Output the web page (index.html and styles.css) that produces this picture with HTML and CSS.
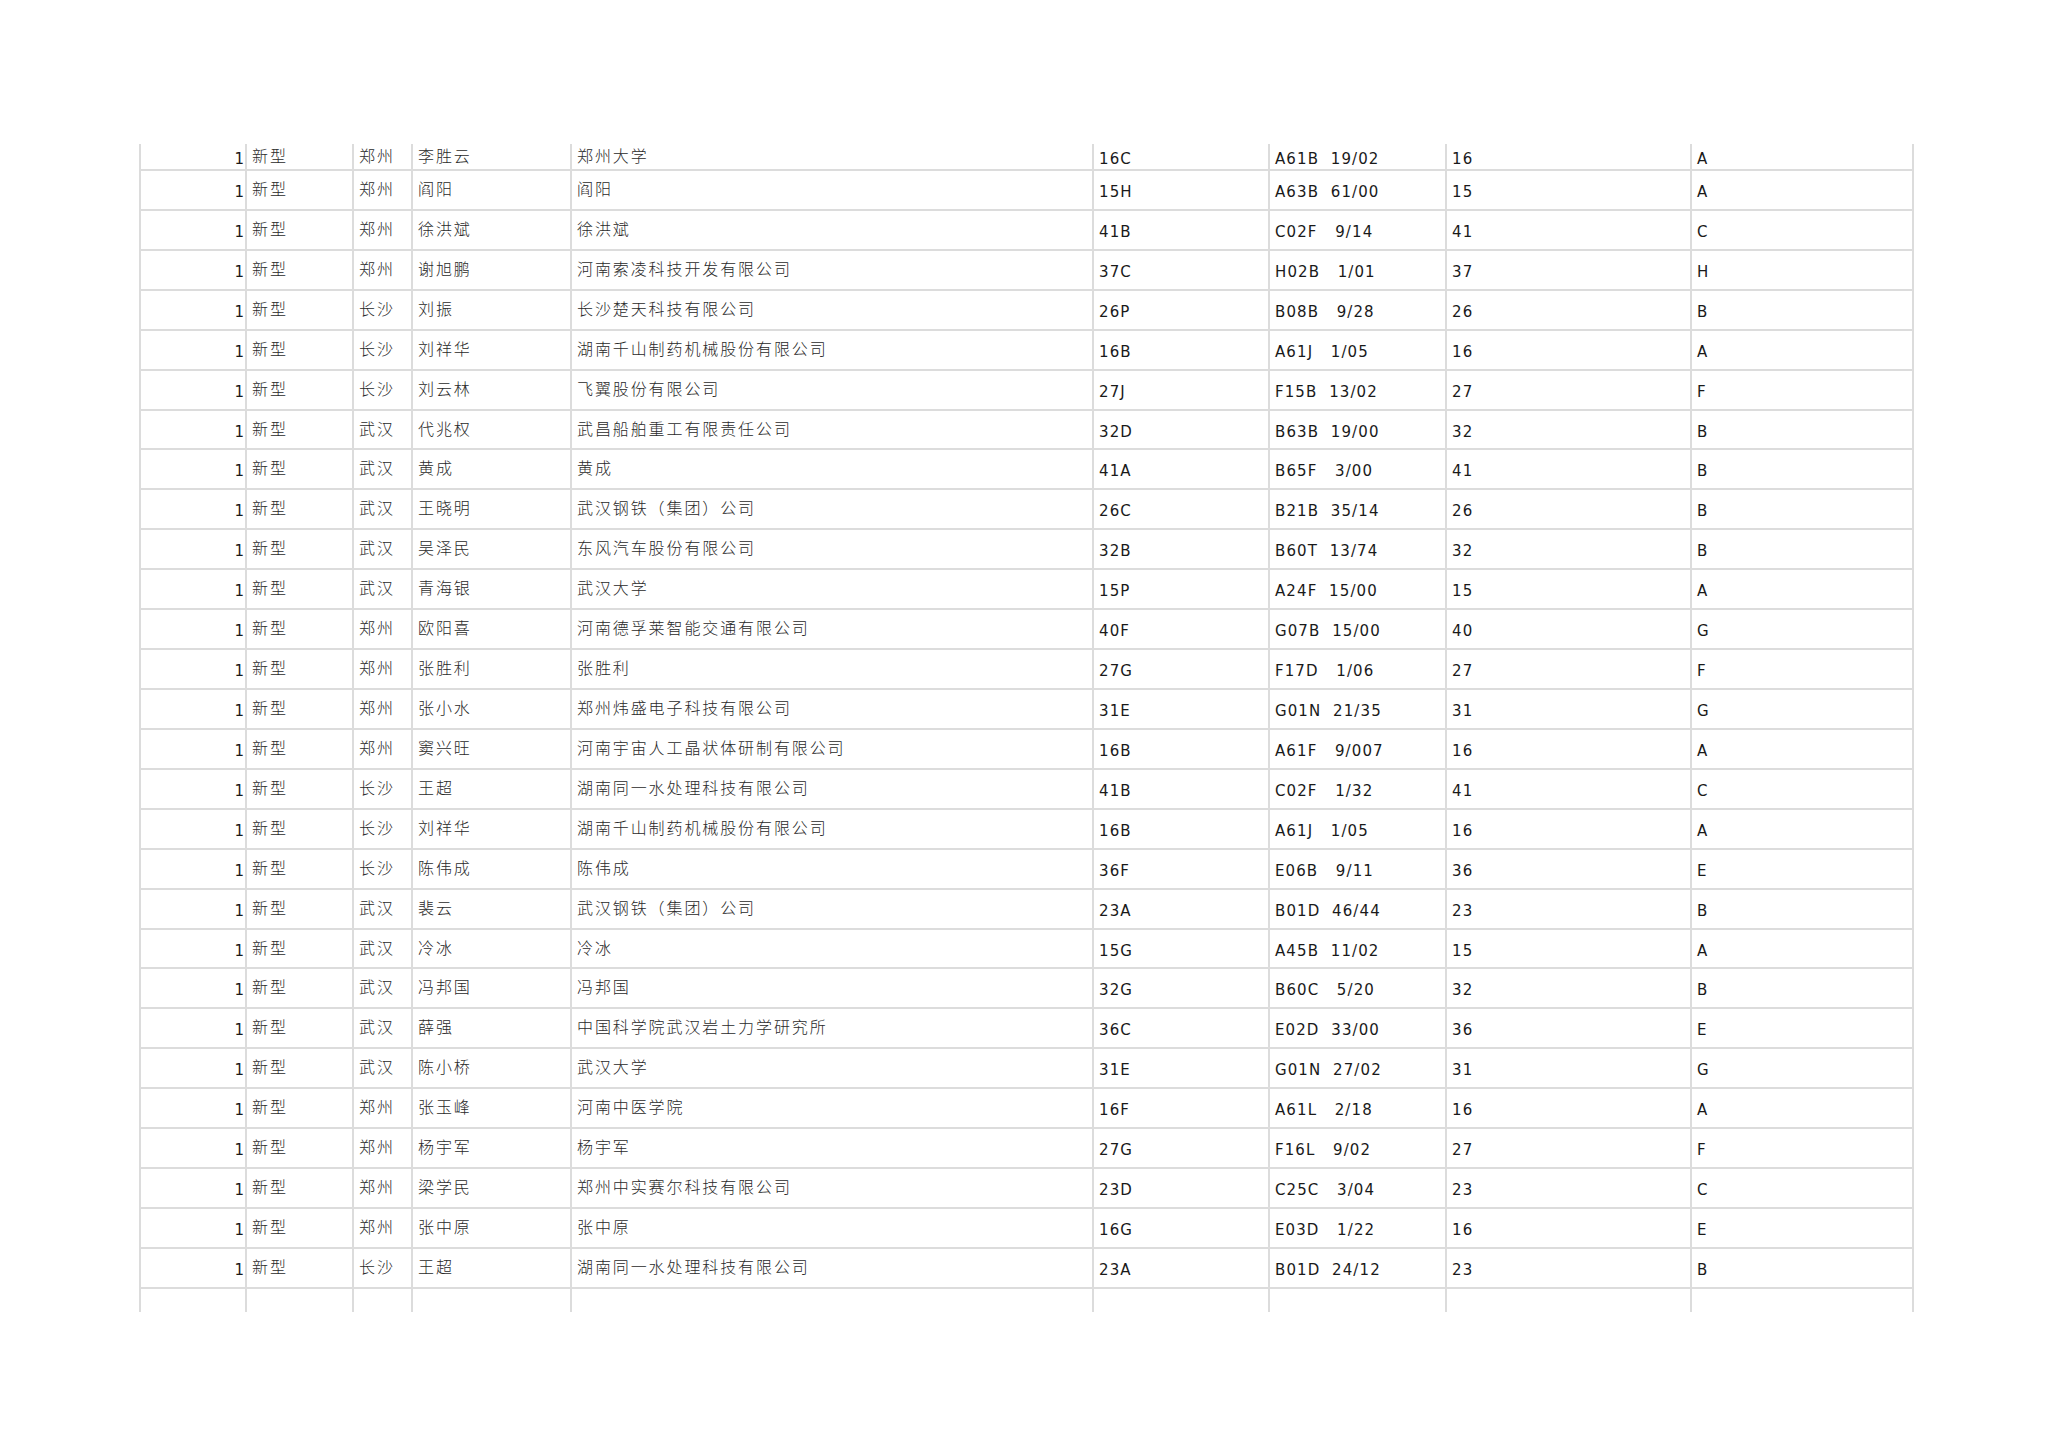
FILE: index.html
```html
<!DOCTYPE html>
<html lang="zh-CN">
<head>
<meta charset="utf-8">
<title>新型</title>
<link rel="stylesheet" href="styles.css">
</head>
<body>
<div class="sheet">
  <div class="row first"><div class="cell num">1</div><div class="cell zh">新型</div><div class="cell zh">郑州</div><div class="cell zh">李胜云</div><div class="cell zh">郑州大学</div><div class="cell">16C</div><div class="cell">A61B  19/02</div><div class="cell">16</div><div class="cell">A</div></div>
  <div class="row"><div class="cell num">1</div><div class="cell zh">新型</div><div class="cell zh">郑州</div><div class="cell zh">阎阳</div><div class="cell zh">阎阳</div><div class="cell">15H</div><div class="cell">A63B  61/00</div><div class="cell">15</div><div class="cell">A</div></div>
  <div class="row"><div class="cell num">1</div><div class="cell zh">新型</div><div class="cell zh">郑州</div><div class="cell zh">徐洪斌</div><div class="cell zh">徐洪斌</div><div class="cell">41B</div><div class="cell">C02F   9/14</div><div class="cell">41</div><div class="cell">C</div></div>
  <div class="row"><div class="cell num">1</div><div class="cell zh">新型</div><div class="cell zh">郑州</div><div class="cell zh">谢旭鹏</div><div class="cell zh">河南索凌科技开发有限公司</div><div class="cell">37C</div><div class="cell">H02B   1/01</div><div class="cell">37</div><div class="cell">H</div></div>
  <div class="row"><div class="cell num">1</div><div class="cell zh">新型</div><div class="cell zh">长沙</div><div class="cell zh">刘振</div><div class="cell zh">长沙楚天科技有限公司</div><div class="cell">26P</div><div class="cell">B08B   9/28</div><div class="cell">26</div><div class="cell">B</div></div>
  <div class="row"><div class="cell num">1</div><div class="cell zh">新型</div><div class="cell zh">长沙</div><div class="cell zh">刘祥华</div><div class="cell zh">湖南千山制药机械股份有限公司</div><div class="cell">16B</div><div class="cell">A61J   1/05</div><div class="cell">16</div><div class="cell">A</div></div>
  <div class="row"><div class="cell num">1</div><div class="cell zh">新型</div><div class="cell zh">长沙</div><div class="cell zh">刘云林</div><div class="cell zh">飞翼股份有限公司</div><div class="cell">27J</div><div class="cell">F15B  13/02</div><div class="cell">27</div><div class="cell">F</div></div>
  <div class="row"><div class="cell num">1</div><div class="cell zh">新型</div><div class="cell zh">武汉</div><div class="cell zh">代兆权</div><div class="cell zh">武昌船舶重工有限责任公司</div><div class="cell">32D</div><div class="cell">B63B  19/00</div><div class="cell">32</div><div class="cell">B</div></div>
  <div class="row"><div class="cell num">1</div><div class="cell zh">新型</div><div class="cell zh">武汉</div><div class="cell zh">黄成</div><div class="cell zh">黄成</div><div class="cell">41A</div><div class="cell">B65F   3/00</div><div class="cell">41</div><div class="cell">B</div></div>
  <div class="row"><div class="cell num">1</div><div class="cell zh">新型</div><div class="cell zh">武汉</div><div class="cell zh">王晓明</div><div class="cell zh">武汉钢铁（集团）公司</div><div class="cell">26C</div><div class="cell">B21B  35/14</div><div class="cell">26</div><div class="cell">B</div></div>
  <div class="row"><div class="cell num">1</div><div class="cell zh">新型</div><div class="cell zh">武汉</div><div class="cell zh">吴泽民</div><div class="cell zh">东风汽车股份有限公司</div><div class="cell">32B</div><div class="cell">B60T  13/74</div><div class="cell">32</div><div class="cell">B</div></div>
  <div class="row"><div class="cell num">1</div><div class="cell zh">新型</div><div class="cell zh">武汉</div><div class="cell zh">青海银</div><div class="cell zh">武汉大学</div><div class="cell">15P</div><div class="cell">A24F  15/00</div><div class="cell">15</div><div class="cell">A</div></div>
  <div class="row"><div class="cell num">1</div><div class="cell zh">新型</div><div class="cell zh">郑州</div><div class="cell zh">欧阳喜</div><div class="cell zh">河南德孚莱智能交通有限公司</div><div class="cell">40F</div><div class="cell">G07B  15/00</div><div class="cell">40</div><div class="cell">G</div></div>
  <div class="row"><div class="cell num">1</div><div class="cell zh">新型</div><div class="cell zh">郑州</div><div class="cell zh">张胜利</div><div class="cell zh">张胜利</div><div class="cell">27G</div><div class="cell">F17D   1/06</div><div class="cell">27</div><div class="cell">F</div></div>
  <div class="row"><div class="cell num">1</div><div class="cell zh">新型</div><div class="cell zh">郑州</div><div class="cell zh">张小水</div><div class="cell zh">郑州炜盛电子科技有限公司</div><div class="cell">31E</div><div class="cell">G01N  21/35</div><div class="cell">31</div><div class="cell">G</div></div>
  <div class="row"><div class="cell num">1</div><div class="cell zh">新型</div><div class="cell zh">郑州</div><div class="cell zh">窦兴旺</div><div class="cell zh">河南宇宙人工晶状体研制有限公司</div><div class="cell">16B</div><div class="cell">A61F   9/007</div><div class="cell">16</div><div class="cell">A</div></div>
  <div class="row"><div class="cell num">1</div><div class="cell zh">新型</div><div class="cell zh">长沙</div><div class="cell zh">王超</div><div class="cell zh">湖南同一水处理科技有限公司</div><div class="cell">41B</div><div class="cell">C02F   1/32</div><div class="cell">41</div><div class="cell">C</div></div>
  <div class="row"><div class="cell num">1</div><div class="cell zh">新型</div><div class="cell zh">长沙</div><div class="cell zh">刘祥华</div><div class="cell zh">湖南千山制药机械股份有限公司</div><div class="cell">16B</div><div class="cell">A61J   1/05</div><div class="cell">16</div><div class="cell">A</div></div>
  <div class="row"><div class="cell num">1</div><div class="cell zh">新型</div><div class="cell zh">长沙</div><div class="cell zh">陈伟成</div><div class="cell zh">陈伟成</div><div class="cell">36F</div><div class="cell">E06B   9/11</div><div class="cell">36</div><div class="cell">E</div></div>
  <div class="row"><div class="cell num">1</div><div class="cell zh">新型</div><div class="cell zh">武汉</div><div class="cell zh">裴云</div><div class="cell zh">武汉钢铁（集团）公司</div><div class="cell">23A</div><div class="cell">B01D  46/44</div><div class="cell">23</div><div class="cell">B</div></div>
  <div class="row"><div class="cell num">1</div><div class="cell zh">新型</div><div class="cell zh">武汉</div><div class="cell zh">冷冰</div><div class="cell zh">冷冰</div><div class="cell">15G</div><div class="cell">A45B  11/02</div><div class="cell">15</div><div class="cell">A</div></div>
  <div class="row"><div class="cell num">1</div><div class="cell zh">新型</div><div class="cell zh">武汉</div><div class="cell zh">冯邦国</div><div class="cell zh">冯邦国</div><div class="cell">32G</div><div class="cell">B60C   5/20</div><div class="cell">32</div><div class="cell">B</div></div>
  <div class="row"><div class="cell num">1</div><div class="cell zh">新型</div><div class="cell zh">武汉</div><div class="cell zh">薛强</div><div class="cell zh">中国科学院武汉岩土力学研究所</div><div class="cell">36C</div><div class="cell">E02D  33/00</div><div class="cell">36</div><div class="cell">E</div></div>
  <div class="row"><div class="cell num">1</div><div class="cell zh">新型</div><div class="cell zh">武汉</div><div class="cell zh">陈小桥</div><div class="cell zh">武汉大学</div><div class="cell">31E</div><div class="cell">G01N  27/02</div><div class="cell">31</div><div class="cell">G</div></div>
  <div class="row"><div class="cell num">1</div><div class="cell zh">新型</div><div class="cell zh">郑州</div><div class="cell zh">张玉峰</div><div class="cell zh">河南中医学院</div><div class="cell">16F</div><div class="cell">A61L   2/18</div><div class="cell">16</div><div class="cell">A</div></div>
  <div class="row"><div class="cell num">1</div><div class="cell zh">新型</div><div class="cell zh">郑州</div><div class="cell zh">杨宇军</div><div class="cell zh">杨宇军</div><div class="cell">27G</div><div class="cell">F16L   9/02</div><div class="cell">27</div><div class="cell">F</div></div>
  <div class="row"><div class="cell num">1</div><div class="cell zh">新型</div><div class="cell zh">郑州</div><div class="cell zh">梁学民</div><div class="cell zh">郑州中实赛尔科技有限公司</div><div class="cell">23D</div><div class="cell">C25C   3/04</div><div class="cell">23</div><div class="cell">C</div></div>
  <div class="row"><div class="cell num">1</div><div class="cell zh">新型</div><div class="cell zh">郑州</div><div class="cell zh">张中原</div><div class="cell zh">张中原</div><div class="cell">16G</div><div class="cell">E03D   1/22</div><div class="cell">16</div><div class="cell">E</div></div>
  <div class="row"><div class="cell num">1</div><div class="cell zh">新型</div><div class="cell zh">长沙</div><div class="cell zh">王超</div><div class="cell zh">湖南同一水处理科技有限公司</div><div class="cell">23A</div><div class="cell">B01D  24/12</div><div class="cell">23</div><div class="cell">B</div></div>
  <div class="row last"><div class="cell num"></div><div class="cell"></div><div class="cell"></div><div class="cell"></div><div class="cell"></div><div class="cell"></div><div class="cell"></div><div class="cell"></div><div class="cell"></div></div>
</div>
</body>
</html>
```

FILE: styles.css
```css
html, body {
  margin: 0;
  padding: 0;
  background: #ffffff;
}

.sheet {
  margin: 144px 0 0 139px;
  width: 1775px;
  font-family: "DejaVu Sans", "Noto Sans CJK SC", sans-serif;
  color: #1a1a1a;
}

.row {
  display: grid;
  grid-template-columns: 106px 107px 59px 159px 522px 176px 177px 245px 222px;
  box-sizing: border-box;
  height: 39.93px;
  border-left: 2px solid #dcdcdc;
  border-bottom: 2px solid #dcdcdc;
}

.row.first {
  height: 27px;
}

.row.last {
  height: 23px;
  border-bottom: none;
}

.cell {
  box-sizing: border-box;
  border-right: 2px solid #dcdcdc;
  padding: 12px 0 0 5px;
  font-size: 15px;
  line-height: 18px;
  letter-spacing: 1.1px;
  white-space: pre;
  overflow: hidden;
}

.row.first .cell {
  padding-top: 6px;
}

.cell.num {
  text-align: right;
  padding-left: 0;
  padding-right: 1px;
  letter-spacing: 0;
}

.cell.zh {
  font-family: "Noto Sans CJK SC", sans-serif;
  font-weight: 300;
  font-size: 16px;
  letter-spacing: 1.9px;
  padding-top: 8px;
  color: #2a2a2a;
}

.row.first .cell.zh {
  padding-top: 2px;
}
```
